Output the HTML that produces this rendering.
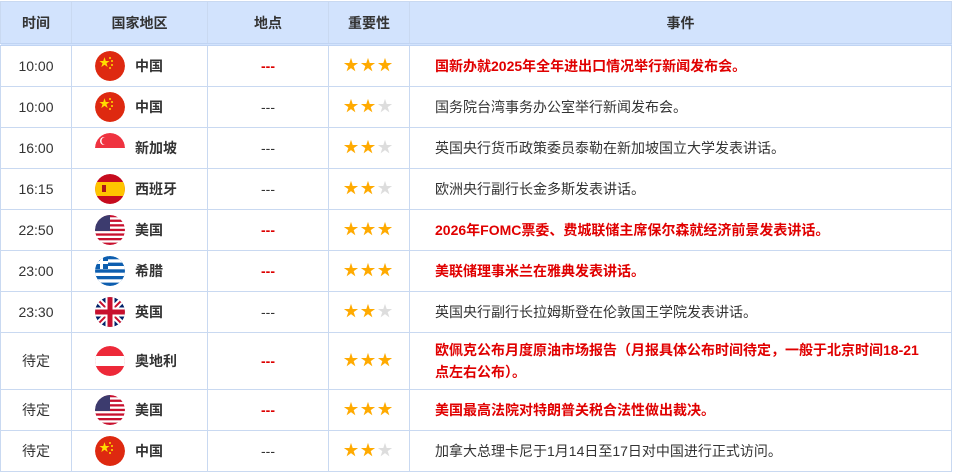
<!DOCTYPE html>
<html><head><meta charset="utf-8"><style>
body{margin:0;background:#fff;font-family:"Liberation Sans","Noto Sans CJK SC",sans-serif;font-size:14px;color:#333}
table{position:absolute;left:0;top:1px;border-collapse:collapse;table-layout:fixed;width:952px}
td,th{border:1px solid #c9d9f1;padding:0;text-align:center;vertical-align:middle;line-height:20px}
th{background:#d2e3fd;height:41px;font-weight:bold;color:#333;font-size:14px;border-bottom:3px double #c0d4f3}
tr.r td{height:40px}
tr.t td{height:56px}
.c{display:flex;align-items:center;padding-left:23px;height:30px;line-height:30px}
.c svg{width:30px;height:30px;margin-right:10px;border-radius:50%;flex:none}
.c b{font-weight:bold;color:#333;display:block;height:30px;line-height:30px}
.red{color:#e00000;font-weight:bold}
.d{color:#333}.dr{color:#d00;font-weight:bold}
.ev{text-align:left;padding-left:25px;line-height:22px}
.s{color:#fa0;font-size:15px;letter-spacing:2px;line-height:16px}.g{color:#ddd}
</style></head><body>
<svg width="0" height="0" style="position:absolute"><defs>
<clipPath id="cc"><circle cx="15" cy="15" r="15"/></clipPath>
<g id="cn"><rect width="30" height="30" fill="#de2910"/><text x="4" y="15" font-size="11" fill="#ffde00">★</text><circle cx="15" cy="7" r="1" fill="#ffde00"/><circle cx="17" cy="10" r="1" fill="#ffde00"/><circle cx="17" cy="14" r="1" fill="#ffde00"/><circle cx="15" cy="17" r="1" fill="#ffde00"/></g>
<g id="us"><rect width="30" height="30" fill="#fff"/><g fill="#c8102e"><rect y="0" width="30" height="2.3"/><rect y="4.6" width="30" height="2.3"/><rect y="9.2" width="30" height="2.3"/><rect y="13.8" width="30" height="2.3"/><rect y="18.4" width="30" height="2.3"/><rect y="23" width="30" height="2.3"/><rect y="27.6" width="30" height="2.4"/></g><rect width="15" height="16" fill="#3c3b6e"/></g>
</defs></svg>
<table>
<colgroup><col style="width:71px"><col style="width:136px"><col style="width:121px"><col style="width:81px"><col></colgroup>
<tr><th>时间</th><th>国家地区</th><th>地点</th><th>重要性</th><th>事件</th></tr>
<tr class="r"><td>10:00</td><td><div class="c"><svg viewBox="0 0 30 30"><g clip-path="url(#cc)"><use href="#cn"/></g></svg><b>中国</b></div></td><td class="dr">---</td><td class="s">★★★</td><td class="ev red">国新办就2025年全年进出口情况举行新闻发布会。</td></tr>
<tr class="r"><td>10:00</td><td><div class="c"><svg viewBox="0 0 30 30"><g clip-path="url(#cc)"><use href="#cn"/></g></svg><b>中国</b></div></td><td class="d">---</td><td class="s">★★<span class="g">★</span></td><td class="ev">国务院台湾事务办公室举行新闻发布会。</td></tr>
<tr class="r"><td>16:00</td><td><div class="c"><svg viewBox="0 0 30 30"><g clip-path="url(#cc)"><rect width="30" height="15" fill="#ef3340"/><rect y="15" width="30" height="15" fill="#fff"/><circle cx="9" cy="8" r="4" fill="#fff"/><circle cx="10.5" cy="8" r="4" fill="#ef3340"/></g></svg><b>新加坡</b></div></td><td class="d">---</td><td class="s">★★<span class="g">★</span></td><td class="ev">英国央行货币政策委员泰勒在新加坡国立大学发表讲话。</td></tr>
<tr class="r"><td>16:15</td><td><div class="c"><svg viewBox="0 0 30 30"><g clip-path="url(#cc)"><rect width="30" height="30" fill="#c60b1e"/><rect y="8" width="30" height="14" fill="#ffc400"/><rect x="7" y="11" width="4" height="7" fill="#ad1519"/></g></svg><b>西班牙</b></div></td><td class="d">---</td><td class="s">★★<span class="g">★</span></td><td class="ev">欧洲央行副行长金多斯发表讲话。</td></tr>
<tr class="r"><td>22:50</td><td><div class="c"><svg viewBox="0 0 30 30"><g clip-path="url(#cc)"><use href="#us"/></g></svg><b>美国</b></div></td><td class="dr">---</td><td class="s">★★★</td><td class="ev red">2026年FOMC票委、费城联储主席保尔森就经济前景发表讲话。</td></tr>
<tr class="r"><td>23:00</td><td><div class="c"><svg viewBox="0 0 30 30"><g clip-path="url(#cc)"><rect width="30" height="30" fill="#0d5eaf"/><g fill="#fff"><rect y="3.3" width="30" height="3.3"/><rect y="10" width="30" height="3.3"/><rect y="16.7" width="30" height="3.3"/><rect y="23.3" width="30" height="3.3"/></g><rect width="13" height="13" fill="#0d5eaf"/><rect x="5" width="3" height="13" fill="#fff"/><rect y="5" width="13" height="3" fill="#fff"/></g></svg><b>希腊</b></div></td><td class="dr">---</td><td class="s">★★★</td><td class="ev red">美联储理事米兰在雅典发表讲话。</td></tr>
<tr class="r"><td>23:30</td><td><div class="c"><svg viewBox="0 0 30 30"><g clip-path="url(#cc)"><rect width="30" height="30" fill="#012169"/><path d="M0 0L30 30M30 0L0 30" stroke="#fff" stroke-width="6"/><path d="M0 0L30 30M30 0L0 30" stroke="#c8102e" stroke-width="2"/><path d="M15 0V30M0 15H30" stroke="#fff" stroke-width="9"/><path d="M15 0V30M0 15H30" stroke="#c8102e" stroke-width="5"/></g></svg><b>英国</b></div></td><td class="d">---</td><td class="s">★★<span class="g">★</span></td><td class="ev">英国央行副行长拉姆斯登在伦敦国王学院发表讲话。</td></tr>
<tr class="t"><td>待定</td><td><div class="c"><svg viewBox="0 0 30 30"><g clip-path="url(#cc)"><rect width="30" height="30" fill="#ed2939"/><rect y="10" width="30" height="10" fill="#fff"/></g></svg><b>奥地利</b></div></td><td class="dr">---</td><td class="s">★★★</td><td class="ev red" style="padding-right:20px">欧佩克公布月度原油市场报告（月报具体公布时间待定，一般于北京时间18-21点左右公布）。</td></tr>
<tr class="r"><td>待定</td><td><div class="c"><svg viewBox="0 0 30 30"><g clip-path="url(#cc)"><use href="#us"/></g></svg><b>美国</b></div></td><td class="dr">---</td><td class="s">★★★</td><td class="ev red">美国最高法院对特朗普关税合法性做出裁决。</td></tr>
<tr class="r"><td>待定</td><td><div class="c"><svg viewBox="0 0 30 30"><g clip-path="url(#cc)"><use href="#cn"/></g></svg><b>中国</b></div></td><td class="d">---</td><td class="s">★★<span class="g">★</span></td><td class="ev">加拿大总理卡尼于1月14日至17日对中国进行正式访问。</td></tr>
</table>
</body></html>
